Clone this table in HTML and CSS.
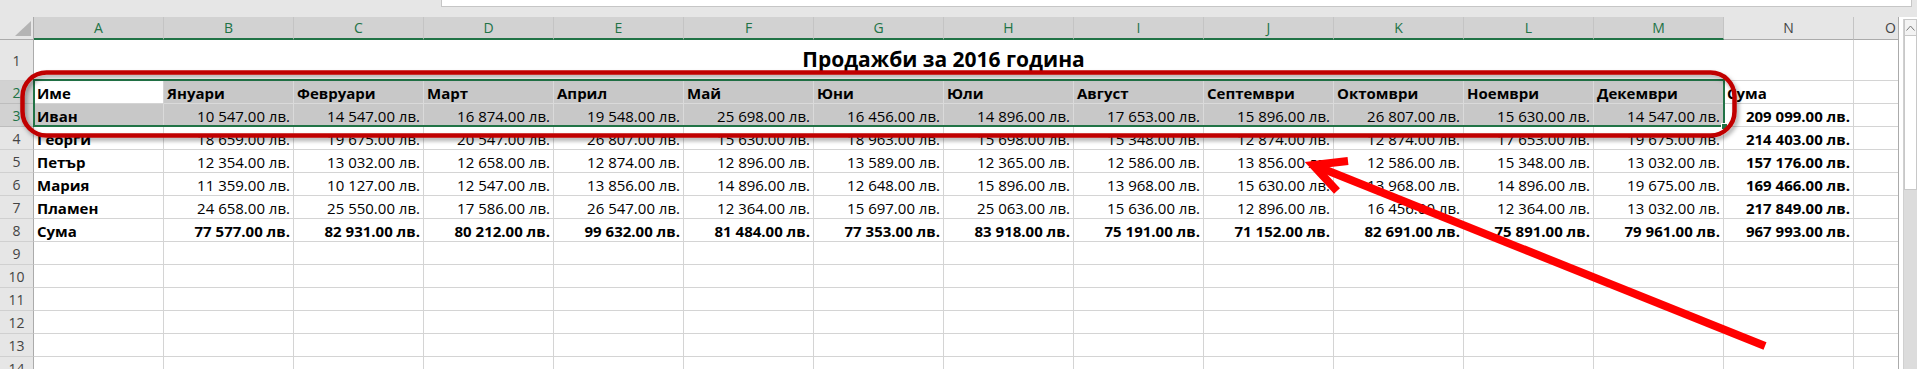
FILE: index.html
```html
<!DOCTYPE html>
<html lang="bg">
<head>
<meta charset="utf-8">
<title>Продажби за 2016 година</title>
<link rel="stylesheet" href="styles.css">
</head>
<body>
<div class="app">
  <div class="topbar"><div class="fxbox"></div></div>
  <div class="main">
    <div class="sheet">
      <!-- column headers -->
      <div class="corner"><span class="tri"></span></div>
      <div class="ch chs">A</div><div class="ch chs">B</div><div class="ch chs">C</div><div class="ch chs">D</div><div class="ch chs">E</div><div class="ch chs">F</div><div class="ch chs">G</div><div class="ch chs">H</div><div class="ch chs">I</div><div class="ch chs">J</div><div class="ch chs">K</div><div class="ch chs">L</div><div class="ch chs">M</div><div class="ch">N</div><div class="ch ch-o">O</div>
      <!-- row 1 -->
      <div class="rh">1</div>
      <div class="c title">Продажби за 2016 година</div>
      <div class="c"></div>
      <!-- row 2 -->
      <div class="rh rhs">2</div>
      <div class="c b active">Име</div><div class="c b s">Януари</div><div class="c b s">Февруари</div><div class="c b s">Март</div><div class="c b s">Април</div><div class="c b s">Май</div><div class="c b s">Юни</div><div class="c b s">Юли</div><div class="c b s">Август</div><div class="c b s">Септември</div><div class="c b s">Октомври</div><div class="c b s">Ноември</div><div class="c b s">Декември</div><div class="c b">Сума</div><div class="c"></div>
      <!-- row 3 -->
      <div class="rh rhs">3</div>
      <div class="c b s">Иван</div><div class="c n s">10 547.00 лв.</div><div class="c n s">14 547.00 лв.</div><div class="c n s">16 874.00 лв.</div><div class="c n s">19 548.00 лв.</div><div class="c n s">25 698.00 лв.</div><div class="c n s">16 456.00 лв.</div><div class="c n s">14 896.00 лв.</div><div class="c n s">17 653.00 лв.</div><div class="c n s">15 896.00 лв.</div><div class="c n s">26 807.00 лв.</div><div class="c n s">15 630.00 лв.</div><div class="c n s">14 547.00 лв.</div><div class="c n b">209 099.00 лв.</div><div class="c"></div>
      <!-- row 4 -->
      <div class="rh">4</div>
      <div class="c b">Георги</div><div class="c n">18 659.00 лв.</div><div class="c n">19 675.00 лв.</div><div class="c n">20 547.00 лв.</div><div class="c n">26 807.00 лв.</div><div class="c n">15 630.00 лв.</div><div class="c n">18 963.00 лв.</div><div class="c n">15 698.00 лв.</div><div class="c n">15 348.00 лв.</div><div class="c n">12 874.00 лв.</div><div class="c n">12 874.00 лв.</div><div class="c n">17 653.00 лв.</div><div class="c n">19 675.00 лв.</div><div class="c n b">214 403.00 лв.</div><div class="c"></div>
      <!-- row 5 -->
      <div class="rh">5</div>
      <div class="c b">Петър</div><div class="c n">12 354.00 лв.</div><div class="c n">13 032.00 лв.</div><div class="c n">12 658.00 лв.</div><div class="c n">12 874.00 лв.</div><div class="c n">12 896.00 лв.</div><div class="c n">13 589.00 лв.</div><div class="c n">12 365.00 лв.</div><div class="c n">12 586.00 лв.</div><div class="c n">13 856.00 лв.</div><div class="c n">12 586.00 лв.</div><div class="c n">15 348.00 лв.</div><div class="c n">13 032.00 лв.</div><div class="c n b">157 176.00 лв.</div><div class="c"></div>
      <!-- row 6 -->
      <div class="rh">6</div>
      <div class="c b">Мария</div><div class="c n">11 359.00 лв.</div><div class="c n">10 127.00 лв.</div><div class="c n">12 547.00 лв.</div><div class="c n">13 856.00 лв.</div><div class="c n">14 896.00 лв.</div><div class="c n">12 648.00 лв.</div><div class="c n">15 896.00 лв.</div><div class="c n">13 968.00 лв.</div><div class="c n">15 630.00 лв.</div><div class="c n">13 968.00 лв.</div><div class="c n">14 896.00 лв.</div><div class="c n">19 675.00 лв.</div><div class="c n b">169 466.00 лв.</div><div class="c"></div>
      <!-- row 7 -->
      <div class="rh">7</div>
      <div class="c b">Пламен</div><div class="c n">24 658.00 лв.</div><div class="c n">25 550.00 лв.</div><div class="c n">17 586.00 лв.</div><div class="c n">26 547.00 лв.</div><div class="c n">12 364.00 лв.</div><div class="c n">15 697.00 лв.</div><div class="c n">25 063.00 лв.</div><div class="c n">15 636.00 лв.</div><div class="c n">12 896.00 лв.</div><div class="c n">16 456.00 лв.</div><div class="c n">12 364.00 лв.</div><div class="c n">13 032.00 лв.</div><div class="c n b">217 849.00 лв.</div><div class="c"></div>
      <!-- row 8 -->
      <div class="rh">8</div>
      <div class="c b">Сума</div><div class="c n b">77 577.00 лв.</div><div class="c n b">82 931.00 лв.</div><div class="c n b">80 212.00 лв.</div><div class="c n b">99 632.00 лв.</div><div class="c n b">81 484.00 лв.</div><div class="c n b">77 353.00 лв.</div><div class="c n b">83 918.00 лв.</div><div class="c n b">75 191.00 лв.</div><div class="c n b">71 152.00 лв.</div><div class="c n b">82 691.00 лв.</div><div class="c n b">75 891.00 лв.</div><div class="c n b">79 961.00 лв.</div><div class="c n b">967 993.00 лв.</div><div class="c"></div>
      <!-- rows 9-14 -->
      <div class="rh">9</div><div class="c"></div><div class="c"></div><div class="c"></div><div class="c"></div><div class="c"></div><div class="c"></div><div class="c"></div><div class="c"></div><div class="c"></div><div class="c"></div><div class="c"></div><div class="c"></div><div class="c"></div><div class="c"></div><div class="c"></div>
      <div class="rh">10</div><div class="c"></div><div class="c"></div><div class="c"></div><div class="c"></div><div class="c"></div><div class="c"></div><div class="c"></div><div class="c"></div><div class="c"></div><div class="c"></div><div class="c"></div><div class="c"></div><div class="c"></div><div class="c"></div><div class="c"></div>
      <div class="rh">11</div><div class="c"></div><div class="c"></div><div class="c"></div><div class="c"></div><div class="c"></div><div class="c"></div><div class="c"></div><div class="c"></div><div class="c"></div><div class="c"></div><div class="c"></div><div class="c"></div><div class="c"></div><div class="c"></div><div class="c"></div>
      <div class="rh">12</div><div class="c"></div><div class="c"></div><div class="c"></div><div class="c"></div><div class="c"></div><div class="c"></div><div class="c"></div><div class="c"></div><div class="c"></div><div class="c"></div><div class="c"></div><div class="c"></div><div class="c"></div><div class="c"></div><div class="c"></div>
      <div class="rh">13</div><div class="c"></div><div class="c"></div><div class="c"></div><div class="c"></div><div class="c"></div><div class="c"></div><div class="c"></div><div class="c"></div><div class="c"></div><div class="c"></div><div class="c"></div><div class="c"></div><div class="c"></div><div class="c"></div><div class="c"></div>
      <div class="rh">14</div><div class="c"></div><div class="c"></div><div class="c"></div><div class="c"></div><div class="c"></div><div class="c"></div><div class="c"></div><div class="c"></div><div class="c"></div><div class="c"></div><div class="c"></div><div class="c"></div><div class="c"></div><div class="c"></div><div class="c"></div>
    </div>
    <div class="vscroll">
      <div class="vbar">
        <div class="vbtn"><svg width="9" height="6" viewBox="0 0 9 6"><path d="M0.5 5.5 L4.5 1 L8.5 5.5" fill="none" stroke="#777" stroke-width="1"/></svg></div>
        <div class="vthumb"></div>
        <div class="vtrack"></div>
      </div>
    </div>
  </div>
  <div class="selbox"><span class="handle"></span></div>
  <svg class="annot" width="1917" height="369" viewBox="0 0 1917 369">
    <defs>
      <filter id="sh" x="-5%" y="-30%" width="110%" height="160%">
        <feDropShadow dx="2" dy="3" stdDeviation="2" flood-color="#000" flood-opacity="0.35"/>
      </filter>
    </defs>
    <rect x="22.5" y="72.5" width="1712" height="63" rx="24" ry="24" fill="none" stroke="#c00000" stroke-width="4.5" filter="url(#sh)"/>
    <line x1="1765" y1="346" x2="1316" y2="166" stroke="#ff0000" stroke-width="8"/>
    <polyline points="1348,161 1313,165 1337,191" fill="none" stroke="#ff0000" stroke-width="8" stroke-linejoin="miter"/>
  </svg>
</div>
</body>
</html>
```

FILE: styles.css
```css
* { box-sizing: border-box; }

html, body {
  margin: 0;
  padding: 0;
  background: #ffffff;
}

body {
  width: 1917px;
  height: 369px;
  overflow: hidden;
  font-family: "Open Sans", "Noto Sans", sans-serif;
}

.app {
  position: relative;
  width: 1917px;
  height: 369px;
  overflow: hidden;
}

.topbar {
  height: 17px;
  background: #e6e6e6;
  padding-left: 441px;
  padding-right: 5px;
}

.fxbox {
  height: 7px;
  background: #ffffff;
  border: 1px solid #c6c6c6;
  border-top: none;
}

.main {
  display: flex;
  height: 352px;
}

.sheet {
  display: grid;
  grid-template-columns: 34px repeat(14, 130px) 45px;
  grid-template-rows: 23px 41px repeat(13, 23px);
  width: 1899px;
  height: 352px;
  overflow: hidden;
  border-right: 1px solid #ababab;
}

.corner {
  position: relative;
  background: #e6e6e6;
  border-right: 1px solid #ababab;
  border-bottom: 1px solid #ababab;
}

.tri {
  position: absolute;
  right: 2px;
  bottom: 3px;
  width: 0;
  height: 0;
  border-left: 16px solid transparent;
  border-bottom: 15px solid #b4b4b4;
}

.ch {
  display: flex;
  align-items: center;
  justify-content: center;
  background: #e6e6e6;
  color: #444444;
  font-size: 14px;
  line-height: 18px;
  border-right: 1px solid #c4c4c4;
  border-bottom: 1px solid #ababab;
  padding-bottom: 1px;
}

.chs {
  background: #d2d2d2;
  color: #217346;
  border-bottom: 2px solid #217346;
  padding-bottom: 0;
}

.ch-o {
  justify-content: flex-end;
  padding-right: 3px;
  border-right: none;
}

.rh {
  display: flex;
  align-items: center;
  justify-content: center;
  background: #e6e6e6;
  color: #444444;
  font-size: 14px;
  line-height: 18px;
  border-right: 1px solid #ababab;
  border-bottom: 1px solid #d0d0d0;
  padding-top: 2px;
}

.rhs {
  background: #d2d2d2;
  color: #217346;
  border-bottom-color: #bdbdbd;
}

.c {
  display: flex;
  align-items: flex-end;
  justify-content: flex-start;
  padding: 0 3px 1px 3px;
  font-size: 15px;
  line-height: 18px;
  color: #000000;
  white-space: nowrap;
  overflow: hidden;
  border-right: 1px solid #d4d4d4;
  border-bottom: 1px solid #d4d4d4;
}

.n { justify-content: flex-end; }
.b { font-weight: 700; }

.s {
  background: #c8c8c8;
  border-right-color: #dadada;
  border-bottom-color: #dadada;
}

.active { background: #ffffff; }

.title {
  grid-column: span 14;
  justify-content: center;
  font-weight: 700;
  font-size: 21px;
  line-height: 28px;
  padding-bottom: 7px;
}

.vscroll {
  flex: 1;
  padding: 2px 0 0 4px;
  background: #ffffff;
}

.vbar {
  display: flex;
  flex-direction: column;
  height: 100%;
  background: #dcdcdc;
  border-left: 1px solid #d0d0d0;
}

.vbtn {
  height: 17px;
  display: flex;
  align-items: center;
  justify-content: center;
  background: #f3f3f3;
  border: 1px solid #c8c8c8;
}

.vthumb {
  height: 154px;
  background: #ffffff;
  border: 1px solid #c8c8c8;
  border-top: none;
}

.vtrack { flex: 1; }

.selbox {
  position: absolute;
  left: 33px;
  top: 79px;
  width: 1692px;
  height: 48px;
  border: 2px solid #217346;
  pointer-events: none;
}

.handle {
  position: absolute;
  right: -5px;
  bottom: -5px;
  width: 7px;
  height: 7px;
  background: #217346;
  border: 1px solid #ffffff;
}

.annot {
  position: absolute;
  left: 0;
  top: 0;
  pointer-events: none;
}
```
